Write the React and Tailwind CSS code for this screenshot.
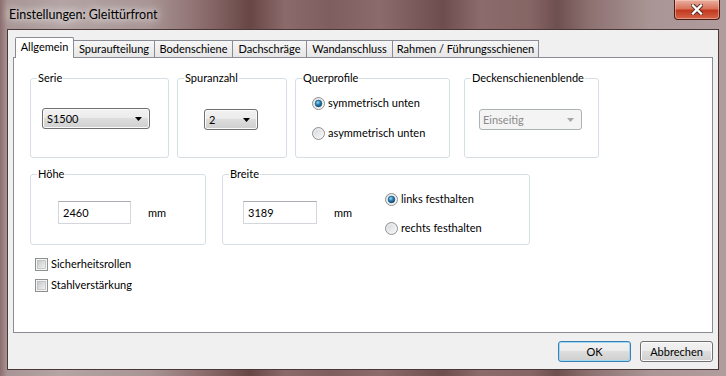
import React from 'react';

const TABS = [
  { label: 'Allgemein', w: 'w-[59px]' },
  { label: 'Spuraufteilung', w: 'w-[81px]' },
  { label: 'Bodenschiene', w: 'w-[78px]' },
  { label: 'Dachschräge', w: 'w-[74px]' },
  { label: 'Wandanschluss', w: 'w-[86px]' },
  { label: 'Rahmen / Führungsschienen', w: 'w-[146px]' },
];

// Win7 style radio button
function Radio({ checked }) {
  return (
    <svg width="13" height="13" viewBox="0 0 13 13" className="shrink-0">
      <defs>
        <linearGradient id="rbFill" x1="0" y1="0" x2="1" y2="1">
          <stop offset="0" stopColor="#d2d4d6" />
          <stop offset="1" stopColor="#fbfbfb" />
        </linearGradient>
        <radialGradient id="rbDot" cx="0.4" cy="0.35" r="0.7">
          <stop offset="0" stopColor="#9fdcf6" />
          <stop offset="0.45" stopColor="#2a86bb" />
          <stop offset="1" stopColor="#0d3c61" />
        </radialGradient>
      </defs>
      <circle cx="6.5" cy="6.5" r="6" fill="url(#rbFill)" stroke="#8f9193" />
      <circle cx="6.5" cy="6.5" r="4.6" fill="none" stroke="#f2f2f2" strokeWidth="0.8" />
      {checked && <circle cx="6.5" cy="6.5" r="3.4" fill="url(#rbDot)" stroke="#1c4f73" strokeWidth="0.5" />}
    </svg>
  );
}

function Checkbox() {
  return (
    <svg width="13" height="13" viewBox="0 0 13 13" className="shrink-0">
      <defs>
        <linearGradient id="cbFill" x1="0" y1="0" x2="1" y2="1">
          <stop offset="0" stopColor="#c4c6c8" />
          <stop offset="1" stopColor="#f3f3f3" />
        </linearGradient>
      </defs>
      <rect x="0.5" y="0.5" width="12" height="12" fill="#f4f4f4" stroke="#8e8f8f" />
      <rect x="2.5" y="2.5" width="8" height="8" fill="url(#cbFill)" stroke="#aeb0b2" strokeWidth="0.6" />
    </svg>
  );
}

function Arrow({ color = '#000' }) {
  return (
    <svg width="7" height="4" viewBox="0 0 7 4" className="shrink-0">
      <path d="M0 0h7L3.5 4z" fill={color} />
    </svg>
  );
}

function Field({ label, className, children }) {
  return (
    <fieldset className={`rounded-[3px] border border-[#d5dfe5] ${className}`}>
      <legend className="ml-[6px] px-[1px] leading-[16px]">{label}</legend>
      {children}
    </fieldset>
  );
}

const btnBg =
  'bg-[linear-gradient(#f2f2f2_0%,#ebebeb_50%,#dddddd_50%,#cfcfcf_100%)] shadow-[inset_0_0_0_1px_#fbfbfb]';

export default function App() {
  return (
    <div className="relative h-[376px] w-[726px] overflow-hidden bg-[linear-gradient(90deg,#8c6d6d_0px,#a89494_7px,#b4a4a4_60px,#a89494_150px,#8e6f6f_200px,#684646_250px,#8a6a6a_285px,#7e5e5e_330px,#8b6b6b_380px,#6d4d4d_443px,#8b6b6b_480px,#866565_530px,#6f5050_557px,#8d7171_590px,#a99595_650px,#b09c9c_726px)] font-['Lato','Noto_Sans',sans-serif] text-[11px] leading-[16px] text-black">
      {/* title bar */}
      <div className="flex h-[29px] items-center pl-[9px] text-[12.5px] [text-shadow:0_0_8px_#fff,0_0_12px_rgba(255,255,255,0.8)]">
        Einstellungen: Gleittürfront
      </div>
      <div className="absolute right-[6px] top-0 flex h-[20px] w-[46px] items-center justify-center rounded-b-[4px] border border-t-0 border-[#4a1c14] bg-[linear-gradient(#eab0a2_0%,#d9735b_45%,#c2391f_55%,#d5654a_100%)] shadow-[inset_0_0_0_1px_rgba(255,220,200,0.45)]">
        <svg width="12" height="11" viewBox="0 0 12 11">
          <path d="M2 1.5l8 8M10 1.5l-8 8" stroke="#4a2418" strokeWidth="4" strokeLinecap="square" />
          <path d="M2 1.5l8 8M10 1.5l-8 8" stroke="#fff" strokeWidth="2.4" strokeLinecap="square" />
        </svg>
      </div>

      {/* client area */}
      <div className="mx-[7px] h-[341px] border border-[#4a3838] bg-[#f0f0f0] pl-[5px] pt-[7px]">
        <div className="ml-[2px] flex h-[20px] items-end">
          {TABS.map((t, i) =>
            i === 0 ? (
              <div
                key={t.label}
                className={`relative z-10 -mb-px flex h-[21px] items-center justify-center rounded-t-[2px] border border-b-0 border-[#898c95] bg-white pb-[2px] ${t.w}`}
              >
                {t.label}
              </div>
            ) : (
              <div
                key={t.label}
                className={`flex h-[17px] items-center justify-center whitespace-nowrap border-t border-r border-[#898c95] bg-[linear-gradient(#f6f6f6,#e6e6e6)] ${t.w}`}
              >
                {t.label}
              </div>
            )
          )}
        </div>

        {/* tab panel */}
        <div className="h-[276px] w-[700px] border border-[#898c95] bg-white pl-[16px] pt-[12px]">
          <div className="flex">
            <Field label="Serie" className="h-[88px] w-[139px]">
              <div className={`ml-[11px] mt-[22px] flex h-[21px] w-[108px] items-center justify-between rounded-[3px] border border-[#707070] pl-[4px] pr-[7px] ${btnBg}`}>
                <span>S1500</span>
                <Arrow />
              </div>
            </Field>
            <Field label="Spuranzahl" className="ml-[8px] h-[88px] w-[110px]">
              <div className={`ml-[26px] mt-[23px] flex h-[21px] w-[54px] items-center justify-between rounded-[3px] border border-[#707070] pl-[4px] pr-[7px] ${btnBg}`}>
                <span>2</span>
                <Arrow />
              </div>
            </Field>
            <Field label="Querprofile" className="ml-[8px] h-[88px] w-[155px]">
              <div className="ml-[16px] mt-[9px] flex flex-col gap-[14px]">
                <label className="flex items-center gap-[3px]">
                  <Radio checked />
                  <span>symmetrisch unten</span>
                </label>
                <label className="flex items-center gap-[3px]">
                  <Radio />
                  <span>asymmetrisch unten</span>
                </label>
              </div>
            </Field>
            <Field label="Deckenschienenblende" className="ml-[14px] h-[88px] w-[135px]">
              <div className="ml-[14px] mt-[23px] flex h-[21px] w-[103px] items-center justify-between rounded-[3px] border border-[#adb2b5] bg-[#f4f4f4] pl-[3px] pr-[7px] text-[#8a8a8a]">
                <span>Einseitig</span>
                <Arrow color="#a6a6a6" />
              </div>
            </Field>
          </div>

          <div className="mt-[8px] flex">
            <Field label="Höhe" className="h-[79px] w-[176px]">
              <div className="ml-[27px] mt-[19px] flex items-center">
                <div className="flex h-[23px] w-[73px] items-center border border-[#d3d6db] border-t-[#abadb3] bg-white pl-[4px]">
                  2460
                </div>
                <span className="pl-[17px]">mm</span>
              </div>
            </Field>
            <Field label="Breite" className="ml-[16px] h-[79px] w-[308px]">
              <div className="flex items-start">
                <div className="ml-[20px] mt-[19px] flex items-center">
                  <div className="flex h-[23px] w-[74px] items-center border border-[#d3d6db] border-t-[#abadb3] bg-white pl-[4px]">
                    3189
                  </div>
                  <span className="w-[51px] pl-[17px]">mm</span>
                </div>
                <div className="ml-[17px] mt-[9px] flex flex-col gap-[13px]">
                  <label className="flex items-center gap-[3px]">
                    <Radio checked />
                    <span>links festhalten</span>
                  </label>
                  <label className="flex items-center gap-[3px]">
                    <Radio />
                    <span>rechts festhalten</span>
                  </label>
                </div>
              </div>
            </Field>
          </div>

          <div className="ml-[5px] mt-[11px] flex flex-col gap-[5px]">
            <label className="flex items-center gap-[3px]">
              <Checkbox />
              <span>Sicherheitsrollen</span>
            </label>
            <label className="flex items-center gap-[3px]">
              <Checkbox />
              <span>Stahlverstärkung</span>
            </label>
          </div>
        </div>

        {/* buttons */}
        <div className="mt-[8px] flex justify-end gap-[9px] pr-[5px]">
          <button className="h-[21px] w-[73px] rounded-[3px] border border-[#3c7fb1] bg-[linear-gradient(#f2f2f2_0%,#ebebeb_50%,#dddddd_50%,#cfcfcf_100%)] shadow-[inset_0_0_0_1px_#9fd8f3]">
            OK
          </button>
          <button className={`h-[21px] w-[73px] rounded-[3px] border border-[#707070] ${btnBg}`}>
            Abbrechen
          </button>
        </div>
      </div>
    </div>
  );
}
